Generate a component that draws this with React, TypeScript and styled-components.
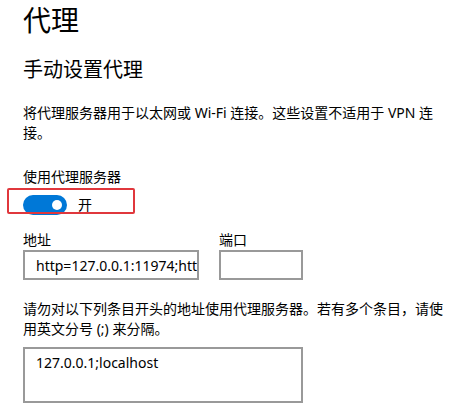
import React from 'react';
import styled, { createGlobalStyle } from 'styled-components';

const GlobalStyle = createGlobalStyle`
    body {
        margin: 0;
        background: #ffffff;
        color: #000000;
        font-family: "Noto Sans", "Noto Sans CJK SC", sans-serif;
    }
`

const Page = styled.div`
    box-sizing: border-box;
    width: 466px;
    height: 406px;
    overflow: hidden;
    padding: 2px 13px 0 23px;
`

const Title = styled.h1`
    margin: 0;
    font-size: 28px;
    line-height: 36px;
    font-weight: 400;
`

const Subtitle = styled.h2`
    margin: 18px 0 0;
    font-size: 20px;
    line-height: 28px;
    font-weight: 400;
`

const Description = styled.p<{ $top: number }>`
    margin: ${props => props.$top}px 0 0;
    font-size: 14px;
    line-height: 20px;
`

const FieldLabel = styled.div<{ $top?: number }>`
    margin-top: ${props => props.$top ?? 0}px;
    font-size: 14px;
    line-height: 20px;
`

const ToggleRow = styled.div`
    position: relative;
    display: flex;
    align-items: center;
    margin-top: 8px;
    height: 20px;
`

const Switch = styled.div`
    position: relative;
    width: 44px;
    height: 20px;
    border-radius: 10px;
    background: #0078d7;
`

const Knob = styled.span`
    position: absolute;
    top: 5px;
    right: 5px;
    width: 10px;
    height: 10px;
    border-radius: 50%;
    background: #ffffff;
`

const StateText = styled.span`
    margin-left: 11px;
    font-size: 14px;
    line-height: 20px;
`

// red annotation frame drawn over the switch
const Highlight = styled.div`
    position: absolute;
    left: -16px;
    top: -7px;
    width: 128px;
    height: 26px;
    box-sizing: border-box;
    border: 2px solid #e0373c;
    border-radius: 2px;
    pointer-events: none;
`

const FieldRow = styled.div`
    display: flex;
    gap: 20px;
    margin-top: 15px;
`

const Field = styled.div`
    display: flex;
    flex-direction: column;
`

const TextInput = styled.input<{ $width: number }>`
    box-sizing: border-box;
    width: ${props => props.$width}px;
    height: 30px;
    margin: 0;
    padding: 0 0 0 11px;
    border: 2px solid #999999;
    border-radius: 0;
    outline: none;
    background: #ffffff;
    color: #000000;
    font-family: "Noto Sans", "Noto Sans CJK SC", sans-serif;
    font-size: 14px;
`

const TextArea = styled.textarea`
    display: block;
    box-sizing: border-box;
    width: 280px;
    height: 56px;
    margin: 8px 0 0;
    padding: 4px 11px;
    border: 2px solid #999999;
    border-radius: 0;
    outline: none;
    resize: none;
    overflow: hidden;
    color: #000000;
    font-family: "Noto Sans", "Noto Sans CJK SC", sans-serif;
    font-size: 14px;
    line-height: 20px;
`

export default function App() {
    return (
        <Page>
            <GlobalStyle/>
            <Title>代理</Title>
            <Subtitle>手动设置代理</Subtitle>
            <Description $top={19}>
                将代理服务器用于以太网或 Wi-Fi 连接。这些设置不适用于 VPN 连<br/>接。
            </Description>

            <FieldLabel $top={24}>使用代理服务器</FieldLabel>
            <ToggleRow>
                <Switch><Knob/></Switch>
                <StateText>开</StateText>
                <Highlight/>
            </ToggleRow>

            <FieldRow>
                <Field>
                    <FieldLabel>地址</FieldLabel>
                    <TextInput $width={176} readOnly value="http=127.0.0.1:11974;https=127.0.0.1:11974"/>
                </Field>
                <Field>
                    <FieldLabel>端口</FieldLabel>
                    <TextInput $width={84} readOnly value=""/>
                </Field>
            </FieldRow>

            <Description $top={19}>
                请勿对以下列条目开头的地址使用代理服务器。若有多个条目，请使<br/>用英文分号 (;) 来分隔。
            </Description>
            <TextArea readOnly value="127.0.0.1;localhost"/>
        </Page>
    );
}
